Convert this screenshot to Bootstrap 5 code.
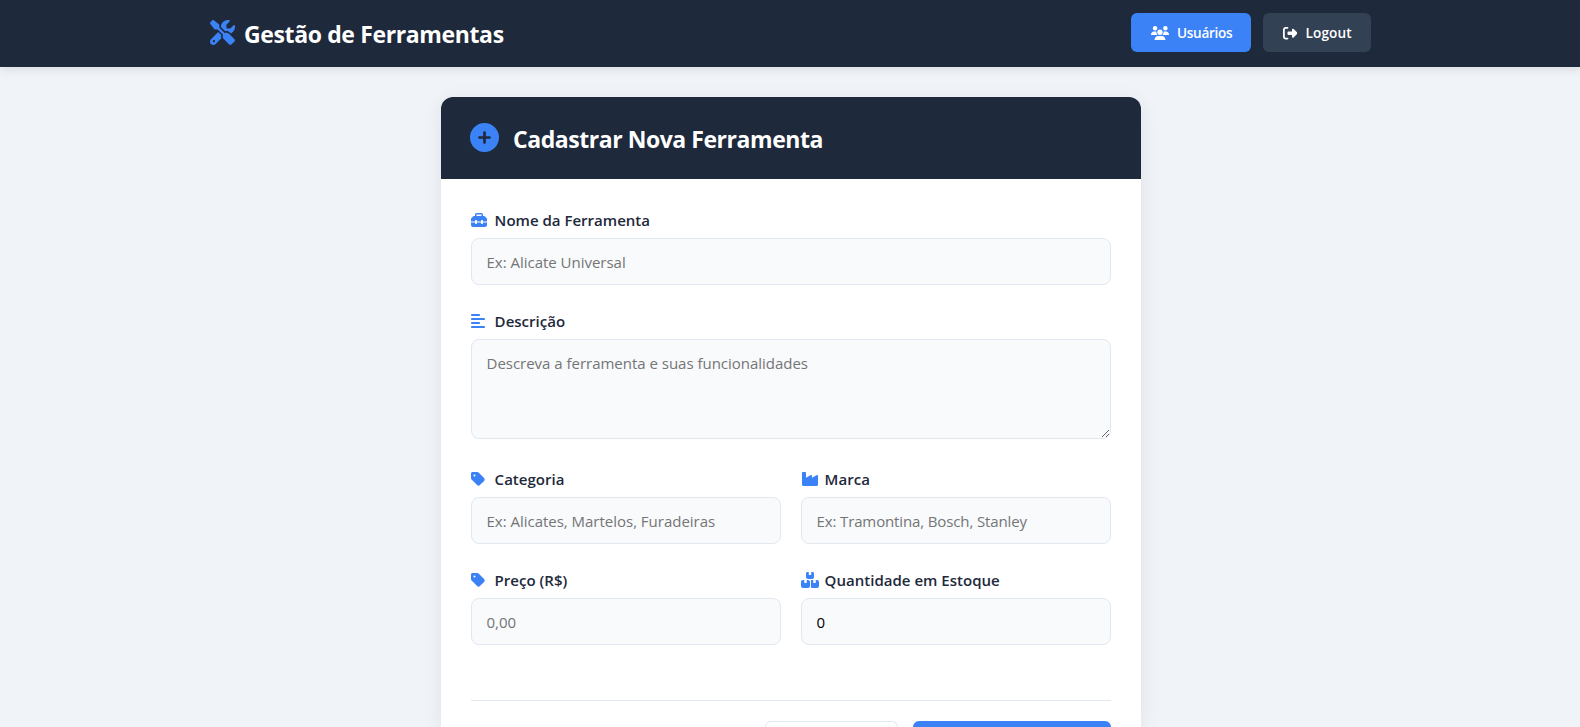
<!DOCTYPE html>
<html lang="pt-BR">
<head>
<meta charset="utf-8">
<meta name="viewport" content="width=device-width, initial-scale=1">
<title>Gestão de Ferramentas</title>
<link rel="stylesheet" href="https://cdn.jsdelivr.net/npm/bootstrap@5.3.0/dist/css/bootstrap.min.css">
<style>
  :root { --navy: #1e293b; --blue: #3b82f6; --line: #e2e8f0; }
  html { overflow: hidden; }
  body { width: 1582px; height: 727px; overflow: hidden; background: #f0f4f8; color: var(--navy);
         font-family: "Open Sans", "Noto Sans", sans-serif; }
  svg { display: block; flex: none; fill: currentColor; }
  .topbar { height: 67px; background: var(--navy); box-shadow: 0 2px 10px rgba(0,0,0,.1); }
  .topbar-inner { width: 1162px; height: 65px; padding-right: 1px; }
  .brand-icon { color: var(--blue); }
  .brand-name { font-size: 23px; font-weight: 700; letter-spacing: -.37px; line-height: 32px; margin: 3px 0 0 9px; }
  .top-btn { height: 39px; padding: 1px 20px 0; border: 0; border-radius: 6px; font-size: 13.6px; font-weight: 600; color: #fff; }
  .top-btn:hover { color: #fff; }
  .btn-users { width: 120px; background: var(--blue); letter-spacing: -.3px; }
  .btn-logout { width: 108px; background: #334155; letter-spacing: .15px; }
  .form-card { width: 700px; height: 630px; margin-top: 30px; border: 0; border-radius: 12px 12px 0 0; overflow: hidden; box-shadow: 0 4px 20px rgba(0,0,0,.08); }
  .form-head { height: 82px; padding: 0 29px; background: var(--navy); border: 0; flex: none; }
  .form-head h1 { font-size: 23px; font-weight: 700; letter-spacing: -.45px; line-height: 32px; margin: 1px 0 0 14px; }
  .form-body { padding: 30px 30px 0; }
  .field { margin-bottom: 25px; }
  .field-label { height: 21px; margin-bottom: 8px; font-size: 15.04px; font-weight: 600; line-height: 21px; }
  .field-label .label-text { padding-top: 2px; }
  .field-icon { width: 24px; margin-left: -.4px; color: var(--blue); }
  .field .form-control { height: 47px; padding: 0 14.500px; border: 1px solid var(--line); border-radius: 8px; background: #f8fafc;
                  font-size: 15.04px; color: #000; letter-spacing: -.03px; line-height: 22px; }
  .field .form-control::placeholder { color: #757575; opacity: 1; }
  .field textarea.form-control { height: 100px; padding: 12px 14.500px; resize: vertical; }
  .field .form-control.tighter { letter-spacing: -.14px; }
  .two-cols { --bs-gutter-x: 20px; }
  .form-foot { height: 27px; margin-top: 30px; padding-top: 20px; border-top: 1px solid var(--line); gap: 15px; }
  .form-foot .btn { height: 6px; border-radius: 8px 8px 0 0; padding: 0; }
  .btn-cancel { width: 133px; border: 1px solid var(--line); border-bottom: 0; background: #fff; }
  .btn-save { width: 198px; border: 0; background: var(--blue); }
</style>
</head>
<body>
<header class="topbar position-relative">
  <div class="topbar-inner mx-auto d-flex align-items-center justify-content-between">
    <div class="d-flex align-items-center text-white">
      <svg class="brand-icon" width="25" height="25" viewBox="0 0 512 512"><path d="M78.6 5C69.1-2.4 55.6-1.5 47 7L7 47c-8.5 8.5-9.4 22-2.1 31.6l80 104c4.5 5.9 11.6 9.4 19 9.4h54.1l109 109c-14.7 29-10 65.4 14.3 89.6l112 112c12.5 12.5 32.8 12.5 45.3 0l64-64c12.5-12.5 12.5-32.8 0-45.3l-112-112c-24.2-24.2-60.6-29-89.6-14.3l-109-109V104c0-7.5-3.5-14.5-9.4-19L78.6 5zM19.9 396.1C7.2 408.8 0 426.1 0 444.1C0 481.6 30.4 512 67.9 512c18 0 35.3-7.2 48-19.9L233.7 374.3c-7.8-20.9-9-43.6-3.6-65.1l-61.7-61.7L19.9 396.1zM512 144c0-10.5-1.1-20.7-3.2-30.5c-2.4-11.2-16.1-14.1-24.2-6l-63.9 63.9c-3 3-7.1 4.7-11.3 4.7H352c-8.8 0-16-7.2-16-16V102.6c0-4.2 1.7-8.3 4.7-11.3l63.9-63.9c8.1-8.1 5.2-21.8-6-24.2C388.7 1.1 378.5 0 368 0C288.5 0 224 64.5 224 144l0 .8 85.3 85.3c36-9.1 75.8 .5 104 28.7L429 274.5c49-23 83-72.8 83-130.5zM56 432a24 24 0 1 1 48 0 24 24 0 1 1 -48 0z"/></svg>
      <span class="brand-name">Gestão de Ferramentas</span>
    </div>
    <nav class="d-flex" style="gap:12px">
      <a href="#" class="btn top-btn btn-users d-flex align-items-center">
        <svg class="me-2" width="18" height="14.4" viewBox="0 0 640 512"><path d="M144 0a80 80 0 1 1 0 160A80 80 0 1 1 144 0zM512 0a80 80 0 1 1 0 160A80 80 0 1 1 512 0zM0 298.7C0 239.8 47.8 192 106.7 192h42.7c15.9 0 31 3.5 44.6 9.7c-1.3 7.2-1.9 14.7-1.9 22.3c0 38.2 16.8 72.5 43.3 96H21.3C9.6 320 0 310.4 0 298.7zM405.3 320h-.7c26.6-23.5 43.3-57.8 43.3-96c0-7.6-.7-15-1.9-22.3c13.6-6.3 28.7-9.7 44.6-9.7h42.7C592.2 192 640 239.8 640 298.7c0 11.8-9.6 21.3-21.3 21.3H405.3zM224 224a96 96 0 1 1 192 0 96 96 0 1 1 -192 0zM128 485.3C128 411.7 187.7 352 261.3 352H378.7C452.3 352 512 411.7 512 485.3c0 14.7-11.9 26.7-26.7 26.7H154.7c-14.7 0-26.7-11.9-26.7-26.7z"/></svg>Usuários</a>
      <a href="#" class="btn top-btn btn-logout d-flex align-items-center">
        <svg class="me-2" width="14.4" height="14.4" viewBox="0 0 512 512"><path d="M377.9 105.9L500.7 228.7c7.2 7.2 11.3 17.1 11.3 27.3s-4.1 20.1-11.3 27.3L377.9 406.1c-6.4 6.4-15 9.9-24 9.9c-18.7 0-33.9-15.2-33.9-33.9l0-62.1-128 0c-17.7 0-32-14.3-32-32l0-64c0-17.7 14.3-32 32-32l128 0 0-62.1c0-18.7 15.2-33.9 33.9-33.9c9 0 17.6 3.6 24 9.9zM160 96L96 96c-17.7 0-32 14.3-32 32l0 256c0 17.7 14.3 32 32 32l64 0c17.7 0 32 14.3 32 32s-14.3 32-32 32l-64 0c-53 0-96-43-96-96L0 128C0 75 43 32 96 32l64 0c17.7 0 32 14.3 32 32s-14.3 32-32 32z"/></svg>Logout</a>
    </nav>
  </div>
</header>

<svg class="d-none" aria-hidden="true">
  <symbol id="i-tag" viewBox="0 0 448 512"><path d="M0 80V229.5c0 17 6.7 33.3 18.7 45.3l176 176c25 25 65.5 25 90.5 0L418.7 317.3c25-25 25-65.5 0-90.5l-176-176c-12-12-28.3-18.7-45.3-18.7H48C21.5 32 0 53.5 0 80zm112 32a32 32 0 1 1 0 64 32 32 0 1 1 0-64z"/></symbol>
</svg>

<main class="card form-card mx-auto">
  <div class="card-header form-head d-flex align-items-center text-white">
    <svg class="brand-icon" width="29" height="29" viewBox="0 0 512 512" style="margin-bottom:2px"><path d="M256 512A256 256 0 1 0 256 0a256 256 0 1 0 0 512zM232 344V280H168c-13.3 0-24-10.7-24-24s10.7-24 24-24h64V168c0-13.3 10.7-24 24-24s24 10.7 24 24v64h64c13.3 0 24 10.7 24 24s-10.7 24-24 24H280v64c0 13.3-10.7 24-24 24s-24-10.7-24-24z"/></svg>
    <h1>Cadastrar Nova Ferramenta</h1>
  </div>
  <form class="card-body form-body">
    <div class="field">
      <label class="field-label d-flex align-items-center" for="nome"><span class="field-icon"><svg width="16" height="16" viewBox="0 0 512 512"><path d="M176 88v40H336V88c0-4.4-3.6-8-8-8H184c-4.4 0-8 3.6-8 8zm-48 40V88c0-30.9 25.1-56 56-56H328c30.9 0 56 25.1 56 56v40h28.1c12.7 0 24.9 5.1 33.9 14.1l51.9 51.9c9 9 14.1 21.2 14.1 33.9V304H384V288c0-17.7-14.3-32-32-32s-32 14.3-32 32v16H192V288c0-17.7-14.3-32-32-32s-32 14.3-32 32v16H0V227.9c0-12.7 5.1-24.9 14.1-33.9l51.9-51.9c9-9 21.2-14.1 33.9-14.1H128zM0 416V336H128v16c0 17.7 14.3 32 32 32s32-14.3 32-32V336H320v16c0 17.7 14.3 32 32 32s32-14.3 32-32V336H512v80c0 35.3-28.7 64-64 64H64c-35.3 0-64-28.7-64-64z"/></svg></span><span class="label-text">Nome da Ferramenta</span></label>
      <input id="nome" type="text" class="form-control" placeholder="Ex: Alicate Universal">
    </div>
    <div class="field" style="margin-bottom:29px">
      <label class="field-label d-flex align-items-center" for="descricao"><span class="field-icon"><svg width="14" height="16" viewBox="0 0 448 512"><path d="M288 64c0 17.7-14.3 32-32 32H32C14.3 96 0 81.7 0 64S14.3 32 32 32H256c17.7 0 32 14.3 32 32zm0 256c0 17.7-14.3 32-32 32H32c-17.7 0-32-14.3-32-32s14.3-32 32-32H256c17.7 0 32 14.3 32 32zM0 192c0-17.7 14.3-32 32-32H416c17.7 0 32 14.3 32 32s-14.3 32-32 32H32c-17.7 0-32-14.3-32-32zM448 448c0 17.7-14.3 32-32 32H32c-17.7 0-32-14.3-32-32s14.3-32 32-32H416c17.7 0 32 14.3 32 32z"/></svg></span><span class="label-text">Descrição</span></label>
      <textarea id="descricao" class="form-control" placeholder="Descreva a ferramenta e suas funcionalidades"></textarea>
    </div>
    <div class="row two-cols">
      <div class="col-6"><div class="field">
        <label class="field-label d-flex align-items-center" for="categoria"><span class="field-icon"><svg width="14" height="16"><use href="#i-tag"/></svg></span><span class="label-text">Categoria</span></label>
        <input id="categoria" type="text" class="form-control" placeholder="Ex: Alicates, Martelos, Furadeiras">
      </div></div>
      <div class="col-6"><div class="field">
        <label class="field-label d-flex align-items-center" for="marca"><span class="field-icon"><svg width="18" height="16" viewBox="0 0 576 512"><path d="M64 32C46.3 32 32 46.3 32 64V432c0 26.5 21.5 48 48 48H496c26.5 0 48-21.5 48-48V152.2c0-18.2-19.4-29.7-35.4-21.1L352 215.4V152.2c0-18.2-19.4-29.7-35.4-21.1L160 215.4V64c0-17.7-14.3-32-32-32H64z"/></svg></span><span class="label-text">Marca</span></label>
        <input id="marca" type="text" class="form-control tighter" placeholder="Ex: Tramontina, Bosch, Stanley">
      </div></div>
      <div class="col-6"><div class="field">
        <label class="field-label d-flex align-items-center" for="preco"><span class="field-icon"><svg width="14" height="16"><use href="#i-tag"/></svg></span><span class="label-text">Preço (R$)</span></label>
        <input id="preco" type="text" class="form-control" placeholder="0,00">
      </div></div>
      <div class="col-6"><div class="field">
        <label class="field-label d-flex align-items-center" for="estoque"><span class="field-icon"><svg width="18" height="16" viewBox="0 0 576 512"><path d="M248 0H208c-26.5 0-48 21.5-48 48V160c0 35.3 28.7 64 64 64H352c35.3 0 64-28.7 64-64V48c0-26.5-21.5-48-48-48H328V80c0 8.8-7.2 16-16 16H264c-8.8 0-16-7.2-16-16V0zM64 256c-35.3 0-64 28.7-64 64V448c0 35.3 28.7 64 64 64H224c35.3 0 64-28.7 64-64V320c0-35.3-28.7-64-64-64H184v80c0 8.8-7.2 16-16 16H120c-8.8 0-16-7.2-16-16V256H64zM352 512H512c35.3 0 64-28.7 64-64V320c0-35.3-28.7-64-64-64H472v80c0 8.8-7.2 16-16 16H408c-8.8 0-16-7.2-16-16V256H352c-15 0-28.8 5.1-39.7 13.8c4.9 10.4 7.7 22 7.7 34.2V464c0 12.2-2.8 23.8-7.7 34.2C323.2 506.900 337 512 352 512z"/></svg></span><span class="label-text">Quantidade em Estoque</span></label>
        <input id="estoque" type="text" class="form-control" value="0">
      </div></div>
    </div>
    <div class="form-foot d-flex justify-content-end">
      <button type="button" class="btn btn-cancel"></button>
      <button type="submit" class="btn btn-save"></button>
    </div>
  </form>
</main>
<script src="https://cdn.jsdelivr.net/npm/bootstrap@5.3.0/dist/js/bootstrap.bundle.min.js"></script>
</body>
</html>
